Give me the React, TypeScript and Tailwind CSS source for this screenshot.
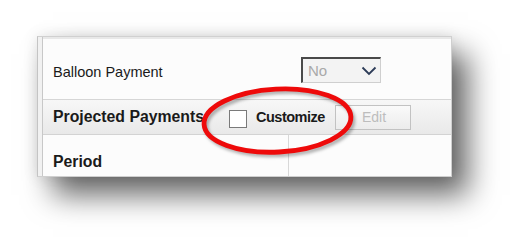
import React from 'react';

function Dropdown() {
  return (
    <div className="mt-[20px] flex h-[26px] w-[80px] items-center justify-between border-t-2 border-l-2 border-r border-b border-t-[#4a4a4a] border-l-[#4a4a4a] border-r-[#cfcfcf] border-b-[#cfcfcf] bg-[#f3f3f3] pl-[5px] pr-[3px]">
      <span className="text-[15px] leading-none text-[#a9a9a9]">No</span>
      <svg width="16" height="10" viewBox="0 0 16 10" className="mt-[1px]">
        <path d="M1.5 1.5 L8 8 L14.5 1.5" fill="none" stroke="#2c3b57" strokeWidth="1.8" />
      </svg>
    </div>
  );
}

function Ring() {
  return (
    <svg className="pointer-events-none absolute left-0 top-0" width="526" height="251" viewBox="0 0 526 251">
      <defs>
        <filter id="soft" x="-20%" y="-20%" width="140%" height="140%">
          <feGaussianBlur stdDeviation="1.8" />
        </filter>
      </defs>
      <g transform="rotate(-3 278 121)">
        <ellipse cx="279.5" cy="123.5" rx="73.5" ry="31.5" fill="none" stroke="rgba(0,0,0,0.3)" strokeWidth="4.5" filter="url(#soft)" />
        <ellipse cx="277.5" cy="120.5" rx="73.5" ry="31.5" fill="none" stroke="#ee0a0a" strokeWidth="4.8" />
      </g>
    </svg>
  );
}

export default function App() {
  return (
    <div className="relative h-[251px] w-[526px] overflow-hidden bg-white font-['Liberation_Sans',Arial,sans-serif] text-[#1a1a1a]">
      <div className="pl-[37px] pt-[36px]">
        <div className="flex h-[141px] w-[415px] border border-l-[#c4c4c4] border-t-[#d0d0d0] border-r-[#cfcfcf] border-b-[#cfcfcf] bg-[#f1f1f1] shadow-[16px_18px_28px_rgba(0,0,0,0.6),0_0_14px_rgba(0,0,0,0.1)]">
          <div className="w-[4px]" />
          <div className="flex flex-1 flex-col border-l border-[#c8c8c8] bg-[#fcfcfc]">
            {/* Balloon row */}
            <div className="flex h-[63px] items-start border-b border-[#d6d6d6] pl-[10px] shadow-[inset_0_2px_0_#e8e8e8]">
              <div className="w-[248px] pt-[27px] text-[14.5px] leading-[17px]">Balloon Payment</div>
              <Dropdown />
            </div>

            {/* Projected payments row */}
            <div className="flex h-[35px] items-center border-b border-[#d3d3d3] bg-linear-to-b from-[#f7f7f7] to-[#e9e9e9] pl-[10px]">
              <div className="w-[176px] whitespace-nowrap text-[15.8px] font-bold leading-[18px]">Projected Payments</div>
              <div className="mt-[3px] h-[18px] w-[18px] border border-[#7a7a7a] bg-white" />
              <div className="ml-[9px] w-[79px] text-[14.5px] font-bold tracking-[-0.5px] leading-[17px]">Customize</div>
              <div className="flex h-[25px] w-[76px] items-center border-[1.5px] border-[#c2c2c2] bg-linear-to-b from-[#fafafa] to-[#ececec] pl-[26px] text-[14px] text-[#bdbdbd]">
                Edit
              </div>
            </div>

            {/* Period row */}
            <div className="flex flex-1">
              <div className="w-[246px] border-r border-[#d8d8d8] pl-[10px] pt-[18px] text-[15.8px] font-bold leading-[18px]">Period</div>
              <div className="flex-1" />
            </div>
          </div>
        </div>
      </div>
      <Ring />
    </div>
  );
}
